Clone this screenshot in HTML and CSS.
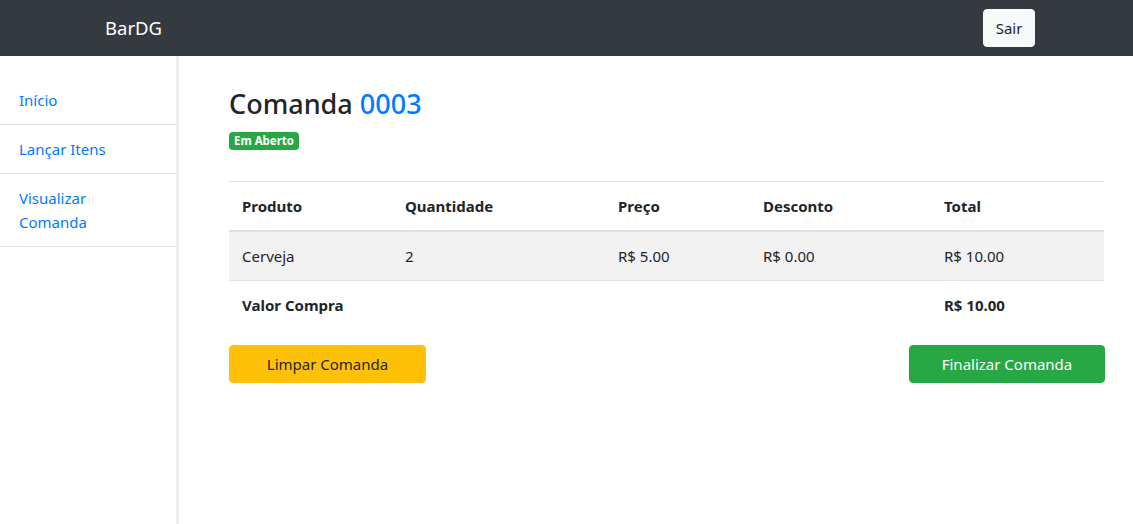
FILE: index.html
```html
<!DOCTYPE html>
<html lang="pt-BR">
<head>
<meta charset="utf-8">
<title>BarDG</title>
<link rel="stylesheet" href="styles.css">
</head>
<body>
<header class="navbar">
  <a class="brand" href="#">BarDG</a>
  <button class="btn btn-light">Sair</button>
</header>
<div class="layout">
  <nav class="sidebar">
    <a class="side-item" href="#">Início</a>
    <a class="side-item" href="#">Lançar Itens</a>
    <a class="side-item" href="#">Visualizar<br>Comanda</a>
  </nav>
  <main class="main">
    <h3 class="title">Comanda <span class="num">0003</span></h3>
    <span class="badge">Em Aberto</span>
    <table class="table">
      <colgroup>
        <col class="c1"><col class="c2"><col class="c3"><col class="c4"><col class="c5">
      </colgroup>
      <thead>
        <tr><th>Produto</th><th>Quantidade</th><th>Preço</th><th>Desconto</th><th>Total</th></tr>
      </thead>
      <tbody>
        <tr class="striped"><td>Cerveja</td><td>2</td><td>R$ 5.00</td><td>R$ 0.00</td><td>R$ 10.00</td></tr>
        <tr><th>Valor Compra</th><td></td><td></td><td></td><th>R$ 10.00</th></tr>
      </tbody>
    </table>
    <div class="actions">
      <button class="btn btn-warning wide">Limpar Comanda</button>
      <button class="btn btn-success wide narrow">Finalizar Comanda</button>
    </div>
  </main>
</div>
</body>
</html>
```
FILE: styles.css
```css
* { box-sizing: border-box; }
html, body { margin: 0; padding: 0; }
body {
  font-family: "Noto Sans", "Open Sans", sans-serif;
  font-size: 16px;
  line-height: 1.5;
  color: #212529;
  background: #fff;
  height: 524px;
  overflow: hidden;
}
.navbar {
  height: 56px;
  background: #343a40;
  display: flex;
  align-items: center;
  justify-content: space-between;
  padding: 0 98px 0 105px;
}
.brand {
  color: #fff;
  text-decoration: none;
  font-size: 18.5px;
  line-height: 30px;
}
.btn {
  font-family: inherit;
  font-size: 15px;
  line-height: 24px;
  padding: 6px 12px;
  border: 1px solid transparent;
  border-radius: 4px;
  cursor: pointer;
}
.btn-light { background: #f8f9fa; color: #212529; border-color: #f8f9fa; width: 52px; height: 38px; padding: 0; }
.btn-warning { background: #ffc107; border-color: #ffc107; color: #212529; }
.btn-success { background: #28a745; border-color: #28a745; color: #fff; }
.layout {
  display: flex;
  height: 468px;
}
.sidebar {
  width: 179px;
  flex: none;
  border-right: 3px solid #ededed;
  padding-top: 20px;
  display: flex;
  flex-direction: column;
}
.side-item {
  display: block;
  padding: 12px 19px;
  color: #007bff;
  text-decoration: none;
  font-size: 15px;
  line-height: 24px;
  border-bottom: 1px solid #dee2e6;
}
.main {
  flex: 1;
  padding: 30px 29px 0 50px;
}
.title {
  margin: 0;
  font-size: 27px;
  font-weight: 500;
  line-height: 36px;
  color: #212529;
}
.num { color: #007bff; }
.badge {
  display: inline-block;
  margin-top: 10px;
  background: #28a745;
  color: #fff;
  font-size: 11.5px;
  font-weight: 700;
  line-height: 1;
  padding: 3px 5px 3px;
  border-radius: 4px;
  vertical-align: top;
}
.table {
  width: 875px;
  margin-top: 31px;
  border-collapse: collapse;
  font-size: 15px;
}
.c1 { width: 163px; }
.c2 { width: 213px; }
.c3 { width: 145px; }
.c4 { width: 181px; }
.c5 { width: 173px; }
.table th, .table td {
  padding: 12px 11px 12px 13px;
  line-height: 24px;
  text-align: left;
  border-top: 1px solid #dee2e6;
  vertical-align: top;
}
.table th { font-weight: 700; }
.table thead th { border-bottom: 2px solid #dee2e6; }
.striped { background: #f2f2f2; }
.actions {
  display: flex;
  justify-content: space-between;
  width: 876px;
  margin-top: 16px;
}
.wide { width: 197px; height: 38px; padding: 0; }
.narrow { width: 196px; }
```
